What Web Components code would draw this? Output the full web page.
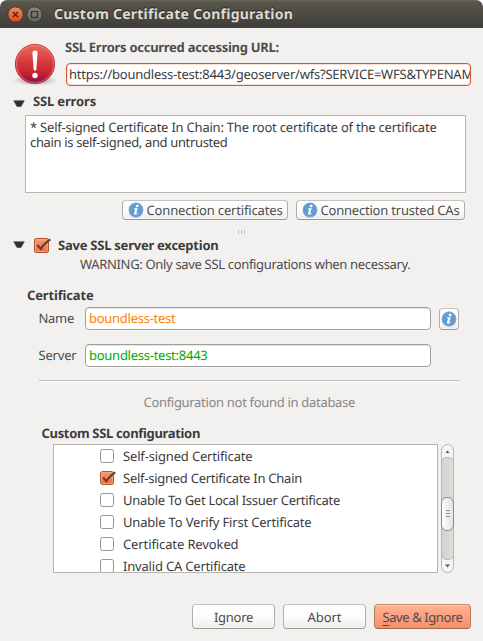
<!DOCTYPE html>
<html lang="en">
<head>
<meta charset="utf-8">
<title>Custom Certificate Configuration</title>
<style>
html,body{margin:0;background:#fff;width:483px;height:641px;overflow:hidden}
body{font:13px/22px "Noto Sans","Open Sans",sans-serif;color:#3c3c3c;text-rendering:geometricPrecision}
</style>
</head>
<body>
<cert-dialog></cert-dialog>
<script>
// Text run whose tracking is adjusted so that it spans a given width.
class FitText extends HTMLElement{
  connectedCallback(){
    const r=this.attachShadow({mode:'open'});
    r.innerHTML='<style>:host{display:block;white-space:nowrap;flex:none}:host([bold]){font-weight:700}span{display:inline-block;white-space:pre}</style><span><slot></slot></span>';
    const s=r.querySelector('span'),w=+this.getAttribute('w'),n=this.textContent.length;
    if(w)s.style.letterSpacing=((w-s.getBoundingClientRect().width)/n)+'px';
  }
}
const define=(name,html)=>customElements.define(name,class extends HTMLElement{
  connectedCallback(){ if(!this.shadowRoot)this.attachShadow({mode:'open'}).innerHTML=html; }
});

define('info-icon',`<style>:host{display:block;width:16px;height:16px;flex:none}svg{display:block}</style>
<svg width="16" height="16" viewBox="0 0 16 16"><circle cx="8" cy="8" r="7.4" fill="#6699d0"/><circle cx="8" cy="8" r="6.8" fill="none" stroke="#8aaedb" stroke-width=".7"/>
<ellipse cx="9.1" cy="3.9" rx="1.5" ry="1.25" fill="#fff"/><path d="M5.8 6.6 9.7 6.1 8.3 11.1Q8.2 11.8 9.6 10.8L9.8 11.3Q8.4 13 6.8 12.8 5.6 12.5 6.1 11L7.2 7.5 5.7 7.2Z" fill="#fff"/></svg>`);

define('error-icon',`<style>:host{display:block;width:46px;height:46px;flex:none}svg{display:block}</style>
<svg width="46" height="46" viewBox="12 41 46 46"><defs><linearGradient id="g" x1="0" y1="0" x2="0" y2="1"><stop offset="0" stop-color="#e96a61"/><stop offset=".45" stop-color="#d8393b"/><stop offset=".78" stop-color="#c11f2f"/><stop offset="1" stop-color="#78134f"/></linearGradient>
<radialGradient id="s"><stop offset="0" stop-color="#000" stop-opacity=".35"/><stop offset="1" stop-color="#000" stop-opacity="0"/></radialGradient></defs>
<ellipse cx="35" cy="80.500" rx="23" ry="5.500" fill="url(#s)"/><circle cx="35" cy="64" r="19.600" fill="url(#g)" stroke="#c4272f" stroke-width=".9"/><circle cx="35" cy="64" r="18.500" fill="none" stroke="#f6a298" stroke-width=".8" stroke-opacity=".65"/>
<path d="M32.400 52.500Q32.400 50.500 35 50.500T37.600 52.500L36.300 70Q35 71.300 33.700 70Z" fill="#fff"/><circle cx="35" cy="75.500" r="2.700" fill="#fff"/></svg>`);

define('fold-arrow',`<style>:host{display:block;width:12px;height:8px;flex:none}svg{display:block}</style>
<svg width="12" height="8" viewBox="0 0 12 8"><path d="M.8.8H11.200L8 6.500H4Z" fill="#2f2f2f" stroke="#4c4c4c" stroke-width=".8" stroke-linejoin="round"/></svg>`);

define('check-box',`<style>:host{display:block;width:14px;height:14px;flex:none}svg{display:block;width:100%;height:100%;overflow:visible}.on{display:none}:host([checked]) .on{display:block}:host([checked]) .off{display:none}</style>
<svg viewBox="0 0 14 14"><defs><linearGradient id="c" x1="0" y1="0" x2="0" y2="1"><stop offset="0" stop-color="#f79a78"/><stop offset="1" stop-color="#ee6c40"/></linearGradient></defs>
<rect class="off" x=".5" y=".5" width="13" height="13" rx="2" fill="#fff" stroke="#98948f"/>
<g class="on"><rect x=".5" y=".5" width="13" height="13" rx="2" fill="url(#c)" stroke="#b5532f"/><rect x="1.500" y="1.500" width="11" height="11" rx="1" fill="none" stroke="#fba98b" stroke-opacity=".7"/><path d="M3.100 6.500 6.400 10.200Q9 5.500 15.300 1.300" fill="none" stroke="#5d4238" stroke-width="2.100"/></g></svg>`);

define('text-field',`<style>:host{display:block;box-sizing:border-box;height:23px;border:1px solid #a09e98;border-radius:4px;background:#fff;box-shadow:inset 0 1px 0 #e6e5e3,0 1px 0 #f9f9f8;padding-left:3px;line-height:21px;overflow:hidden}
:host([focus]){border-color:#d5592c;box-shadow:inset 0 0 0 1px #fbdfd3}</style><slot></slot>`);

define('push-button',`<style>:host{display:flex;box-sizing:border-box;align-items:center;justify-content:center;border:1px solid;border-color:#c6c3bf #b0ada8 #9c9994 #b0ada8;border-radius:4px;background:linear-gradient(#fff,#fbfbfb 55%,#ececeb);color:#4c4c4c;box-shadow:inset 0 0 0 1px #ffffff80}
:host([primary]){background:linear-gradient(#ffb395,#fda081 50%,#f68f68);border-color:#c48a72 #b5795f #a26a54;box-shadow:inset 0 1px 0 #ffc5ae}</style><slot></slot>`);

define('title-bar',`<style>:host{display:flex;align-items:center;box-sizing:border-box;height:28px;padding:2px 0 0 7px;background:linear-gradient(#6b685d 0,#59564c 2px,#56534a 5px,#3e3d38);border-radius:7px 7px 0 0;color:#dfdbd2;font-size:14px;text-shadow:0 -1px 1px #222}svg{flex:none;display:block;margin-right:10px}</style>
<svg width="37" height="18" viewBox="0 0 37 18"><defs><linearGradient id="a" x1="0" y1="0" x2="0" y2="1"><stop offset="0" stop-color="#f48b62"/><stop offset="1" stop-color="#df4a16"/></linearGradient><linearGradient id="b" x1="0" y1="0" x2="0" y2="1"><stop offset="0" stop-color="#8b887e"/><stop offset="1" stop-color="#66645c"/></linearGradient></defs>
<circle cx="8.500" cy="8.500" r="7.700" fill="url(#a)" stroke="#33312c" stroke-width=".9"/><path d="m6 6 5 5m0-5-5 5" stroke="#4b2a1b" stroke-width="1.600"/>
<circle cx="27.500" cy="8.500" r="7.700" fill="url(#b)" stroke="#33312c" stroke-width=".9"/><rect x="24.500" y="5.500" width="6" height="6" fill="none" stroke="#35342f" stroke-width="1.300"/></svg><slot></slot>`);

define('check-row',`<style>:host{display:flex;align-items:center;height:22px;gap:9px;padding-left:46px}</style><slot></slot>`);

define('scroll-bar',`<style>:host{display:block;width:13px;height:129px;flex:none}svg{display:block}</style>
<svg width="13" height="129" viewBox="0 0 13 129"><defs><linearGradient id="t"><stop offset="0" stop-color="#fff"/><stop offset="1" stop-color="#e2e1df"/></linearGradient><linearGradient id="r"><stop offset="0" stop-color="#d3d1ce"/><stop offset="1" stop-color="#dfdedb"/></linearGradient></defs>
<rect x=".5" y=".5" width="12" height="128" rx="6" fill="#f5f5f4" stroke="#b9b6b2"/>
<rect x=".5" y="13.500" width="12" height="102" rx="5" fill="url(#r)" stroke="#b9b6b2"/>
<rect x=".5" y="53.500" width="12" height="33" rx="5.500" fill="url(#t)" stroke="#8f8c87"/>
<path d="M5 66.500h4M5 69.500h4M5 72.500h4" stroke="#94918d"/><path d="M4.500 9 6.500 6.500 8.500 9ZM4 120.500H9L6.500 123.500Z" fill="#555"/></svg>`);

define('cert-dialog',`<style>
:host{display:flex;flex-direction:column;width:483px;height:641px}
main{background:#f2f1f0;flex:1;display:flex;flex-direction:column}
main>*{flex:none}
.row{display:flex;align-items:center}
.soft{color:#4c4c4c}
.head{height:62px;padding:0 12px 0 12px;gap:8px;align-items:flex-start}
.head error-icon{margin-top:13px}
.head>div{flex:1;min-width:0;padding-top:8px}
.head fit-text[bold]{height:27px}
.msg{margin:3px 17px 0 25px;box-sizing:border-box;height:78px;border:1px solid #b8b5b1;background:#fff;line-height:15px;padding:4px 0 0 4px}
.tools{margin-top:7px;padding-left:122px;gap:8px}
.tools push-button{height:20px;gap:3px}
.grip{height:4px;margin-top:10px;justify-content:center;gap:2px}
.grip i{width:1px;height:4px;background:#c3c1bd}
hr{margin:13px 23px 0 39px;border:0;height:1px;background:#c0beba;box-shadow:0 1px 0 #fbfbfb}
.list{padding-left:53px;gap:3px}
.items{box-sizing:border-box;width:385px;height:129px;border:1px solid #b8b5b1;background:#fff;overflow:hidden}
footer{display:flex;margin:31px 12px 0;justify-content:flex-end;gap:8px}
footer push-button{height:25px}
u{text-decoration-thickness:1px;text-underline-offset:3px;text-decoration-skip-ink:none}
</style>
<title-bar><fit-text bold w="239">Custom Certificate Configuration</fit-text></title-bar>
<main>
<div class="row head"><error-icon></error-icon><div><fit-text bold w="214" class="soft" style="margin-left:-1px">SSL Errors occurred accessing URL:</fit-text><text-field focus style="width:405px;padding-left:2px"><fit-text w="404">https://boundless-test:8443/geoserver/wfs?SERVICE=WFS&amp;TYPENAM</fit-text></text-field></div></div>
<div class="row" style="padding-left:13px;gap:8px;height:22px"><fold-arrow style="margin-top:5px"></fold-arrow><fit-text bold w="63">SSL errors</fit-text></div>
<div class="msg"><fit-text w="406.500">* Self-signed Certificate In Chain: The root certificate of the certificate</fit-text><fit-text w="197.500">chain is self-signed, and untrusted</fit-text></div>
<div class="row tools"><push-button style="width:166px"><info-icon></info-icon><fit-text w="136">Connection certificates</fit-text></push-button><push-button style="width:169px"><info-icon></info-icon><fit-text w="139">Connection trusted CAs</fit-text></push-button></div>
<div class="row grip"><i></i><i></i><i></i></div>
<div class="row" style="padding-left:13px;height:22px"><fold-arrow></fold-arrow><check-box checked style="width:15px;height:15px;margin:0 9px 0 9px"></check-box><fit-text bold w="160.500">Save SSL server exception</fit-text></div>
<fit-text class="soft" w="330.500" style="margin:-3px 0 0 80px">WARNING: Only save SSL configurations when necessary.</fit-text>
<fit-text bold w="66.500" style="margin:9px 0 0 27px">Certificate</fit-text>
<div class="row" style="padding-left:38.500px;margin-top:1px"><fit-text class="soft" w="35.500" style="width:46.500px;height:23px">Name</fit-text><text-field style="width:346px;color:#ff8000"><fit-text w="86.500">boundless-test</fit-text></text-field><push-button style="width:20px;height:22px;margin-left:8px"><info-icon></info-icon></push-button></div>
<div class="row" style="padding-left:38.500px;margin-top:14px"><fit-text class="soft" w="38" style="width:46.500px;height:23px">Server</fit-text><text-field style="width:346px;color:#00aa00"><fit-text w="118.500">boundless-test:8443</fit-text></text-field></div>
<hr>
<fit-text w="211.500" style="margin:10px 0 0 143.500px;color:#878786">Configuration not found in database</fit-text>
<fit-text bold w="158.500" style="margin:9px 0 0 41.500px">Custom SSL configuration</fit-text>
<div class="row list"><div class="items">
<check-row><check-box></check-box><fit-text w="129.500">Self-signed Certificate</fit-text></check-row>
<check-row><check-box checked></check-box><fit-text w="179">Self-signed Certificate In Chain</fit-text></check-row>
<check-row><check-box></check-box><fit-text w="217">Unable To Get Local Issuer Certificate</fit-text></check-row>
<check-row><check-box></check-box><fit-text w="188.500">Unable To Verify First Certificate</fit-text></check-row>
<check-row><check-box></check-box><fit-text w="115.500">Certificate Revoked</fit-text></check-row>
<check-row><check-box></check-box><fit-text w="122.500">Invalid CA Certificate</fit-text></check-row>
</div><scroll-bar></scroll-bar></div>
<footer><push-button style="width:83px"><fit-text w="39">Ignore</fit-text></push-button><push-button style="width:83px"><fit-text w="34">Abort</fit-text></push-button><push-button primary style="width:97px"><fit-text w="80"><u>S</u>ave &amp; Ignore</fit-text></push-button></footer>
</main>`);
customElements.define('fit-text',FitText);
</script>
</body>
</html>
